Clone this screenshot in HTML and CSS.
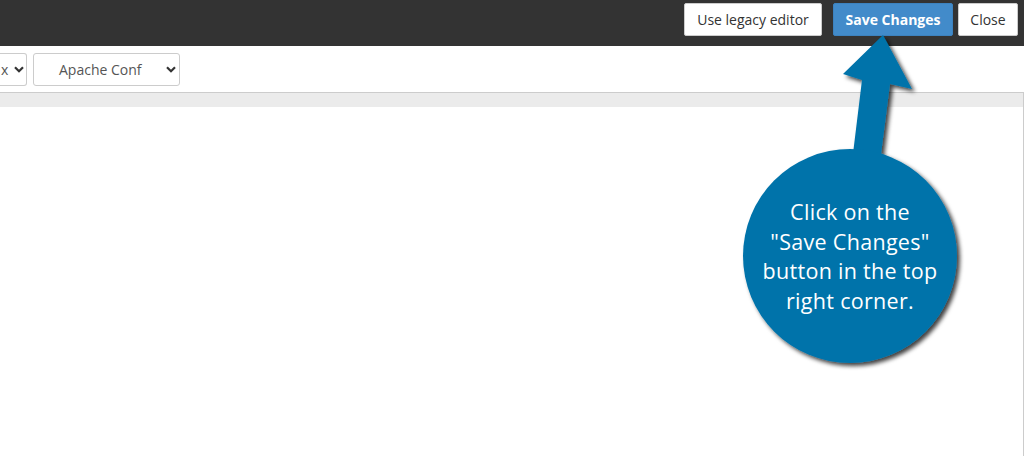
FILE: index.html
```html
<!DOCTYPE html>
<html lang="en">
<head>
<meta charset="utf-8">
<title>Editor</title>
<link rel="stylesheet" href="styles.css">
</head>
<body>
<div class="page">
  <header class="topbar">
    <button class="btn btn-legacy">Use legacy editor</button>
    <button class="btn btn-primary">Save Changes</button>
    <button class="btn btn-close">Close</button>
  </header>
  <div class="toolbar">
    <div class="select select-cut">
      <span class="select-text">x</span>
      <svg class="chev" width="10" height="7" viewBox="0 0 10 7"><path d="M1 1.2 L5 5.2 L9 1.2" fill="none" stroke="#333" stroke-width="2.2"/></svg>
    </div>
    <div class="select select-mode">
      <span class="select-text">Apache Conf</span>
      <svg class="chev" width="10" height="7" viewBox="0 0 10 7"><path d="M1 1.2 L5 5.2 L9 1.2" fill="none" stroke="#333" stroke-width="2.2"/></svg>
    </div>
  </div>
  <div class="editor">
    <div class="editor-band"></div>
    <div class="editor-body"></div>
  </div>

  <div class="callout">
    <svg class="callout-shape" width="1024" height="456" viewBox="0 0 1024 456">
      <defs>
        <filter id="sh" x="-20%" y="-20%" width="140%" height="140%">
          <feDropShadow dx="3" dy="3" stdDeviation="2" flood-color="#000" flood-opacity="0.75"/>
        </filter>
      </defs>
      <g filter="url(#sh)" fill="#0073aa">
        <path d="M883 35 L843 74 L862 80 L851 170 L879 170 L890 84 L912 89 Z"/>
        <circle cx="850" cy="256" r="107"/>
      </g>
    </svg>
    <div class="callout-text">Click on the<br>"Save Changes"<br>button in the top<br>right corner.</div>
  </div>
</div>
</body>
</html>
```

FILE: styles.css
```css
html, body {
  margin: 0;
  padding: 0;
  background: #fff;
}
body {
  font-family: "Open Sans", "Noto Sans", sans-serif;
  overflow: hidden;
}
.page {
  position: relative;
  width: 1024px;
  height: 456px;
  display: flex;
  flex-direction: column;
}
.topbar {
  height: 46px;
  background: #333;
  display: flex;
  justify-content: flex-end;
  align-items: flex-start;
  padding: 3px 6px 0 0;
  box-sizing: border-box;
  flex: none;
}
.btn {
  box-sizing: border-box;
  height: 33px;
  padding: 0;
  font-family: "Open Sans", sans-serif;
  font-size: 14px;
  color: #333;
  background: #fff;
  border: 1px solid #ccc;
  border-radius: 2px;
  text-align: center;
  line-height: 31px;
}
.btn-legacy { width: 138px; }
.btn-primary {
  width: 120px;
  margin-left: 11px;
  background: #428bca;
  border-color: #3c82bf;
  color: #fff;
  font-weight: 700;
}
.btn-close {
  width: 60px;
  margin-left: 5px;
}
.toolbar {
  display: flex;
  gap: 6px;
  padding: 7px 0 6px 0;
  flex: none;
}
.select {
  box-sizing: border-box;
  height: 33px;
  border: 1px solid #ccc;
  border-radius: 3px;
  background: #fff;
  display: flex;
  align-items: center;
  font-size: 14px;
  color: #555;
}
.select-cut {
  width: 27px;
  border-left: none;
  border-radius: 0 3px 3px 0;
  padding-left: 1px;
}
.select-cut .select-text {
  width: 13px;
}
.select-mode {
  width: 147px;
  padding-left: 25px;
}
.select-mode .select-text {
  width: 107px;
}
.chev { display: block; }
.editor {
  flex: 1;
  border-top: 1px solid #ccc;
  border-right: 1px solid #ccc;
  display: flex;
  flex-direction: column;
}
.editor-band {
  height: 14px;
  background: #ebebeb;
  flex: none;
}
.editor-body {
  flex: 1;
  background: #fff;
}
.callout {
  position: absolute;
  left: 0;
  top: 0;
  width: 1024px;
  height: 456px;
  pointer-events: none;
}
.callout-shape {
  position: absolute;
  left: 0;
  top: 0;
}
.callout-text {
  position: absolute;
  left: 740px;
  top: 197px;
  width: 220px;
  text-align: center;
  color: #fff;
  font-family: "Open Sans", sans-serif;
  font-size: 21.5px;
  line-height: 29.5px;
  letter-spacing: 0.3px;
}
```
